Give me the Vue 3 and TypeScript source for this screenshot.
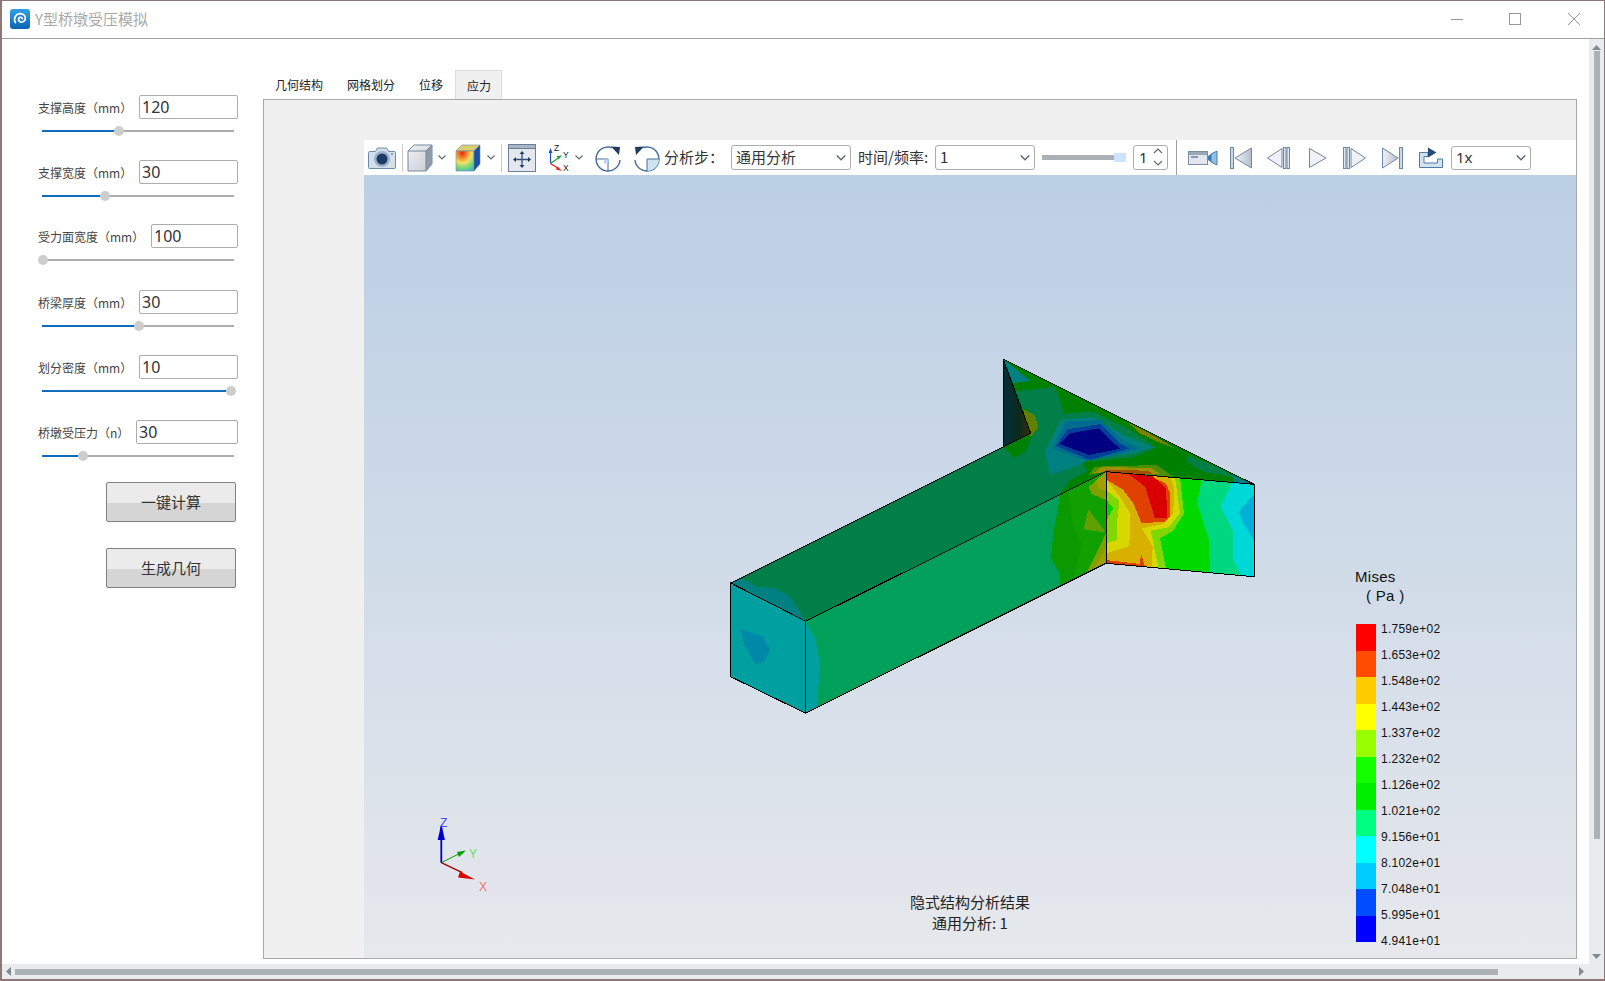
<template>
  <div class="desktop">
    <div class="window">
      <header class="titlebar">
        <svg class="logo" width="20" height="20" viewBox="0 0 20 20">
          <defs>
            <linearGradient id="logoFill" x1="0" y1="0" x2="0" y2="1">
              <stop offset="0" stop-color="#2fa0e6" />
              <stop offset="1" stop-color="#0b62b5" />
            </linearGradient>
          </defs>
          <rect width="20" height="20" rx="3" fill="url(#logoFill)" />
          <path d="M5.5 13.5C3 9.5 6 4.5 10.5 4.6c3.6.1 5.6 3.2 4.6 6-.9 2.500-4.200 3.300-5.900 1.600-1.300-1.300-.8-3.500.9-3.900 1.100-.2 2 .4 2.200 1.300" fill="none" stroke="#fff" stroke-width="1.700" stroke-linecap="round" />
        </svg>
        <span class="app-title">Y型桥墩受压模拟</span>
        <div class="winctl">
          <svg width="12" height="12" viewBox="0 0 12 12"><path d="M0 6.500h12" /></svg>
        </div>
        <div class="winctl">
          <svg width="12" height="12" viewBox="0 0 12 12"><rect x=".5" y=".5" width="11" height="11" /></svg>
        </div>
        <div class="winctl">
          <svg width="12" height="12" viewBox="0 0 12 12"><path d="M0 0l12 12M12 0L0 12" /></svg>
        </div>
      </header>

      <div class="body-row">
        <div class="scroll-content">
          <aside class="sidebar">
            <div v-for="p in params" :key="p.label" class="param" :style="{ height: p.pitch + 'px' }">
              <div class="param-row">
                <label class="param-label">{{ p.label }}</label>
                <div class="param-input" :style="{ width: p.inputWidth + 'px' }">{{ p.value }}</div>
              </div>
              <div class="slider">
                <div class="slider-fill" :style="{ width: p.thumb + 'px' }"></div>
                <div class="slider-thumb" :style="{ left: p.thumb + 'px' }"></div>
              </div>
            </div>
            <button class="action">一键计算</button>
            <button class="action second">生成几何</button>
          </aside>

          <section class="workspace">
            <nav class="tabs">
              <div v-for="t in tabs" :key="t" class="tab" :class="{ active: t === '应力' }">{{ t }}</div>
            </nav>
            <div class="panel">
              <div class="viewer">
                <div class="toolbar">
                  <svg class="ml4" width="28" height="24" viewBox="0 0 28 24">
                    <path d="M1.500 5.500h6l2-3.500h9l2 3.500h6a1 1 0 0 1 1 1v15a1 1 0 0 1-1 1h-25a1 1 0 0 1-1-1v-15a1 1 0 0 1 1-1z" fill="#d5dfeb" stroke="#6d8bab" />
                    <circle cx="14" cy="13" r="8" fill="#9db3cb" />
                    <circle cx="14" cy="13" r="5.500" fill="#1d3a68" />
                    <circle cx="24" cy="8" r="1" fill="#6d8bab" />
                  </svg>
                  <i class="sep ml6"></i>
                  <svg class="ml4" width="26" height="28" viewBox="0 0 26 28">
                    <defs>
                      <linearGradient id="cubeFace" x1="0" y1="0" x2="1" y2="1">
                        <stop offset="0" stop-color="#f2f3f5" />
                        <stop offset="1" stop-color="#c4c9d1" />
                      </linearGradient>
                      <radialGradient id="heatFace" cx=".35" cy=".1" r="1.100">
                        <stop offset="0" stop-color="#e02818" />
                        <stop offset=".25" stop-color="#f09030" />
                        <stop offset=".45" stop-color="#f4e060" />
                        <stop offset=".7" stop-color="#70d880" />
                        <stop offset="1" stop-color="#30a8e0" />
                      </radialGradient>
                    </defs>
                    <path d="M7 1h18v19l-6 7H1V7z" fill="url(#cubeFace)" stroke="#74889e" />
                    <path d="M19 7l6-6v19l-6 7z" fill="#8d9aaa" />
                    <path d="M1 7h18l6-6" fill="none" stroke="#74889e" />
                    <path d="M19 7v20" stroke="#74889e" />
                  </svg>
                  <svg class="chev ml5" width="8" height="5" viewBox="0 0 8 5"><path d="M.5.500L4 4 7.500.5" /></svg>
                  <svg class="ml9" width="26" height="28" viewBox="0 0 26 28">
                    <path d="M7 1h18L19 7H1z" fill="#d8d070" stroke="#74889e" stroke-width=".6" />
                    <path d="M1 7h18v20H1z" fill="url(#heatFace)" stroke="#74889e" stroke-width=".6" />
                    <path d="M19 7l6-6v19l-6 7z" fill="#1c4fa8" stroke="#74889e" stroke-width=".6" />
                  </svg>
                  <svg class="chev ml6" width="8" height="5" viewBox="0 0 8 5"><path d="M.5.500L4 4 7.500.5" /></svg>
                  <i class="sep ml6"></i>
                  <svg class="ml6" width="28" height="28" viewBox="0 0 28 28">
                    <rect x=".5" y=".5" width="27" height="27" fill="#e4e8ee" stroke="#6d7f95" />
                    <rect x=".5" y=".5" width="27" height="4" fill="#a8b6c6" stroke="#6d7f95" />
                    <path d="M14 8v15M7 15.500h15" stroke="#34507a" stroke-width="1.300" />
                    <path d="M14 7l-2.500 3h5zM14 24l-2.500-3h5zM5 15.500l3-2.500v5zM23 15.500l-3-2.500v5z" fill="#1f3b66" />
                  </svg>
                  <svg class="ml12" width="26" height="28" viewBox="0 0 26 28">
                    <path d="M2.500 19.500V8" stroke="#2050c0" stroke-width="1.200" />
                    <path d="M2.500 4L.5 9h4z" fill="#2050c0" />
                    <path d="M2.500 19.500l8-5.500" stroke="#20a040" stroke-width="1.200" />
                    <path d="M14 11.500l-5.500.5 2 3.500z" fill="#20a040" />
                    <path d="M2.500 19.500l8 5" stroke="#e02020" stroke-width="1.200" />
                    <path d="M14 27l-4.500-4.500-1.500 3z" fill="#e02020" />
                    <text x="6" y="6.500" class="axis-mini">Z</text>
                    <text x="15" y="13.500" class="axis-mini">Y</text>
                    <text x="15" y="27" class="axis-mini">X</text>
                  </svg>
                  <svg class="chev ml1" width="8" height="5" viewBox="0 0 8 5"><path d="M.5.500L4 4 7.500.5" /></svg>
                  <svg class="ml12" width="26" height="28" viewBox="0 0 26 28">
                    <path d="M25 16A12 12 0 1 1 17 3.700" fill="none" stroke="#456d99" stroke-width="1.400" />
                    <path d="M1 15h12v12" fill="none" stroke="#456d99" stroke-width="1" />
                    <rect x="9" y="15.500" width="4" height="4" fill="#bcd7ee" />
                    <path d="M16 2.500l9 .5-1 8z" fill="#1f3b66" />
                  </svg>
                  <svg class="ml13" width="26" height="28" viewBox="0 0 26 28">
                    <path d="M1 16A12 12 0 1 0 9 3.700" fill="none" stroke="#456d99" stroke-width="1.400" />
                    <path d="M13 27V15h12A12 12 0 0 1 13 27z" fill="#cfe2f3" />
                    <path d="M25 15H13v12" fill="none" stroke="#456d99" stroke-width="1" />
                    <path d="M10 2.500L1 3l1 8z" fill="#1f3b66" />
                  </svg>
                  <span class="tb-label ml4 w67">分析步：</span>
                  <div class="combo w120"><span>通用分析</span><svg class="chev" width="10" height="6" viewBox="0 0 8 5"><path d="M.5.500L4 4 7.500.5" /></svg></div>
                  <span class="tb-label ml7 w77">时间/频率:</span>
                  <div class="combo w100"><span>1</span><svg class="chev" width="10" height="6" viewBox="0 0 8 5"><path d="M.5.500L4 4 7.500.5" /></svg></div>
                  <div class="time-slider ml7"><div class="time-handle"></div></div>
                  <div class="spin ml7">1
                    <svg class="spin-arrows" width="10" height="18" viewBox="0 0 10 18">
                      <path d="M1 5l4-4 4 4M1 13l4 4 4-4" />
                    </svg>
                  </div>
                  <i class="sep tall ml8"></i>
                  <svg class="ml11" width="30" height="16" viewBox="0 0 30 16">
                    <rect x=".5" y="1.500" width="19" height="13" fill="#e2e7ee" stroke="#7b8da3" />
                    <rect x="1" y="2" width="18" height="3" fill="#9aa8ba" />
                    <rect x="3" y="6" width="7" height="2" fill="#8a98aa" />
                    <path d="M20 6l3-2v8l-3-2z" fill="#2f7fc0" />
                    <path d="M23 4l6-3v14l-6-3z" fill="#8fc0e6" stroke="#4d7ba6" />
                  </svg>
                  <svg class="ml12" width="22" height="22" viewBox="0 0 22 22">
                    <rect x=".5" y=".5" width="3" height="21" fill="#cdd6e1" stroke="#6d87a6" />
                    <path d="M5 11L21.500 1v20z" fill="url(#mediaFill)" stroke="#6d87a6" />
                  </svg>
                  <svg class="ml15" width="23" height="22" viewBox="0 0 23 22">
                    <defs>
                      <linearGradient id="mediaFill" x1="0" y1="0" x2="1" y2="0">
                        <stop offset="0" stop-color="#eef2f6" />
                        <stop offset="1" stop-color="#b4bfcc" />
                      </linearGradient>
                    </defs>
                    <path d="M.5 11L15 1.500v19z" fill="#eef2f7" stroke="#6d87a6" />
                    <rect x="16.500" y=".5" width="2.500" height="21" fill="#dfe6ee" stroke="#6d87a6" />
                    <rect x="20" y=".5" width="2.500" height="21" fill="#dfe6ee" stroke="#6d87a6" />
                  </svg>
                  <svg class="ml19" width="18" height="20" viewBox="0 0 18 20">
                    <path d="M.5.500L17 10 .5 19.500z" fill="#eef2f7" stroke="#6d87a6" />
                  </svg>
                  <svg class="ml16" width="23" height="22" viewBox="0 0 23 22">
                    <rect x=".5" y=".5" width="2.500" height="21" fill="#dfe6ee" stroke="#6d87a6" />
                    <rect x="4" y=".5" width="2.500" height="21" fill="#dfe6ee" stroke="#6d87a6" />
                    <path d="M8 1.500L22.500 11 8 20.500z" fill="#eef2f7" stroke="#6d87a6" />
                  </svg>
                  <svg class="ml16" width="21" height="22" viewBox="0 0 21 22">
                    <path d="M.5 1L16 11 .5 21z" fill="url(#mediaFill)" stroke="#6d87a6" />
                    <rect x="17.500" y=".5" width="3" height="21" fill="#cdd6e1" stroke="#6d87a6" />
                  </svg>
                  <svg class="ml16" width="24" height="21" viewBox="0 0 24 21">
                    <path d="M.5 5.500H9v4H5V16h13.500v-4h5v8.500H.5z" fill="#d4e2f0" stroke="#4d7ba6" />
                    <path d="M9 .5l8.500 5L9 10.500z" fill="#234a7a" />
                  </svg>
                  <div class="combo w80 ml8 short"><span>1x</span><svg class="chev" width="10" height="6" viewBox="0 0 8 5"><path d="M.5.500L4 4 7.500.5" /></svg></div>
                </div>

                <div class="canvas">
                  <svg class="scene" width="1213" height="783" viewBox="364 175 1213 783" shape-rendering="crispEdges">
                    <defs>
                      <clipPath id="clipTop"><polygon points="130,58 882,433 438,395 -463,844 -688,729 130,320" /></clipPath>
                      <clipPath id="clipWing"><polygon points="438,395 882,433 882,710 438,670" /></clipPath>
                      <clipPath id="clipSide"><polygon points="257,574 1158,125 1158,400 257,850" /></clipPath>
                      <clipPath id="clipFront"><polygon points="32,460 257,574 257,850 32,740" /></clipPath>
                      <linearGradient id="shadowFace" x1="0" y1="0" x2="1" y2="0">
                        <stop offset="0" stop-color="#022f3a" />
                        <stop offset=".6" stop-color="#0c2a1c" />
                        <stop offset="1" stop-color="#3a2f08" />
                      </linearGradient>
                    </defs>
                    <g transform="translate(960 340) scale(.33333)">
                      <g clip-path="url(#clipTop)">
                        <polygon v-for="(l, i) in topLayers" :key="i" :points="l.pts" :fill="l.fill" />
                      </g>
                      <polygon points="130,58 212,280 130,320" fill="url(#shadowFace)" />
                    </g>
                    <g transform="translate(720 430) scale(.33333)">
                      <polygon points="32,460 62,445 110,470 165,475 205,495 257,574" fill="#008080" />
                      <g clip-path="url(#clipSide)">
                        <polygon v-for="(l, i) in sideLayers" :key="i" :points="l.pts" :fill="l.fill" />
                      </g>
                      <g clip-path="url(#clipFront)">
                        <polygon points="32,460 257,574 257,850 32,740" fill="#00a0a0" />
                        <polygon points="62,597 130,620 150,660 132,695 107,703 75,650" fill="#0088a8" />
                      </g>
                    </g>
                    <g transform="translate(960 340) scale(.33333)">
                      <g clip-path="url(#clipWing)">
                        <polygon v-for="(l, i) in wingLayers" :key="i" :points="l.pts" :fill="l.fill" />
                      </g>
                    </g>
                    <g class="edges">
                      <polygon points="730.7,583 805.7,621.300 805.700,713.300 730.700,676.700" />
                      <polygon points="1106,471.700 1254,484.300 1254,576.700 1106,563.300" />
                      <polyline points="730.700,583 1003.300,446.700 1003.300,359.300 1254,484.300" />
                      <polyline points="1003.300,359.300 1030.700,433.300 1003.300,446.700" />
                      <polyline points="805.700,621.300 1106,471.700" />
                      <polyline points="805.700,713.300 1106,563.300" />
                    </g>
                    <g class="axes" shape-rendering="auto">
                      <path d="M441.300 862.700V826" stroke="#0000c8" stroke-width="1.800" />
                      <path d="M441.300 824l-3.600 16h7.200z" fill="#0000d0" />
                      <path d="M441.300 862.700l18-9" stroke="#00a000" stroke-width="1" />
                      <path d="M466 850.500l-9 1.500 2 5z" fill="#00a000" />
                      <path d="M441.300 862.700l21 10" stroke="#a00000" stroke-width="1.300" />
                      <path d="M475 879.500l-15-8-2 6z" fill="#e00000" />
                      <text x="440" y="827" fill="#4848ff" class="axis-label">Z</text>
                      <text x="469" y="858" fill="#60e060" class="axis-label">Y</text>
                      <text x="479" y="891" fill="#f07070" class="axis-label">X</text>
                    </g>
                  </svg>
                  <div class="caption">
                    <div>隐式结构分析结果</div>
                    <div>通用分析: 1</div>
                  </div>
                  <div class="legend">
                    <div class="legend-title">Mises<br /><span class="unit">( Pa )</span></div>
                    <div class="legend-body">
                      <div class="ramp">
                        <div v-for="c in ramp" :key="c" class="ramp-band" :style="{ background: c }"></div>
                      </div>
                      <div class="ticks">
                        <div v-for="t in ticks" :key="t">{{ t }}</div>
                      </div>
                    </div>
                  </div>
                </div>
              </div>
            </div>
          </section>
        </div>

        <div class="vscroll">
          <svg width="9" height="5" viewBox="0 0 9 5"><path d="M4.500 0L9 5H0z" /></svg>
          <div class="vthumb"></div>
          <svg class="vdown" width="9" height="5" viewBox="0 0 9 5"><path d="M0 0h9L4.500 5z" /></svg>
        </div>
      </div>

      <div class="hscroll">
        <svg width="5" height="9" viewBox="0 0 5 9"><path d="M0 4.500L5 0v9z" /></svg>
        <div class="hthumb"></div>
        <svg class="hright" width="5" height="9" viewBox="0 0 5 9"><path d="M5 4.500L0 0v9z" /></svg>
      </div>
    </div>
  </div>
</template>

<script setup lang="ts">
interface Param {
  label: string
  value: string
  inputWidth: number
  thumb: number
  pitch: number
}

const params: Param[] = [
  { label: '支撑高度（mm）', value: '120', inputWidth: 99, thumb: 77, pitch: 65 },
  { label: '支撑宽度（mm）', value: '30', inputWidth: 99, thumb: 63, pitch: 64 },
  { label: '受力面宽度（mm）', value: '100', inputWidth: 87, thumb: 1, pitch: 66 },
  { label: '桥梁厚度（mm）', value: '30', inputWidth: 99, thumb: 97, pitch: 65 },
  { label: '划分密度（mm）', value: '10', inputWidth: 99, thumb: 189, pitch: 65 },
  { label: '桥墩受压力（n）', value: '30', inputWidth: 102, thumb: 41, pitch: 62 }
]

const tabs = ['几何结构', '网格划分', '位移', '应力']

const ramp = ['#ff0000', '#ff4c00', '#ffcc00', '#ffff00', '#99ff00', '#14ff00', '#00f000', '#00ff80', '#00ffff', '#00ccff', '#004cff', '#0000ff']

const ticks = ['1.759e+02', '1.653e+02', '1.548e+02', '1.443e+02', '1.337e+02', '1.232e+02', '1.126e+02', '1.021e+02', '9.156e+01', '8.102e+01', '7.048e+01', '5.995e+01', '4.941e+01']

// contour bands, painted back to front, in 3x coordinates of each face
const topLayers = [
  { fill: '#008048', pts: '130,58 882,433 438,395 -463,844 -688,729 130,320' },
  { fill: '#008000', pts: '130,58 882,433 438,395 300,462 330,420 380,395 370,370 270,405 255,335 200,330 165,355 130,320' },
  { fill: '#008048', pts: '160,155 250,145 285,140 310,215 300,235 255,335 200,330 215,290 235,265 225,225 190,205 165,180' },
  { fill: '#008048', pts: '300,222 400,215 510,270 590,322 520,352 380,365 300,300' },
  { fill: '#008080', pts: '130,58 210,122 160,130' },
  { fill: '#008048', pts: '680,345 780,385 825,412 730,395 680,365' },
  { fill: '#008080', pts: '815,405 882,433 825,428' },
  { fill: '#608000', pts: '190,208 225,225 235,265 212,290 200,260' },
  { fill: '#808000', pts: '505,248 560,275 645,325 600,308 540,280' },
  { fill: '#008080', pts: '255,335 300,240 400,232 500,290 580,322 490,345 390,350 370,370 270,405' },
  { fill: '#006c90', pts: '275,325 315,245 420,240 490,300 540,325 470,345 380,362 330,345' },
  { fill: '#004098', pts: '288,318 322,268 422,252 480,310 510,325 390,360' },
  { fill: '#000080', pts: '300,312 330,280 415,265 460,310 482,325 440,335 385,345' },
  { fill: '#4c9000', pts: '385,405 405,380 590,375 640,410 438,395' },
  { fill: '#a09000', pts: '400,400 425,380 575,385 600,402 438,395' },
  { fill: '#a05000', pts: '430,395 440,390 565,392 580,404' }
]

const sideLayers = [
  { fill: '#009f5a', pts: '257,574 1158,125 1158,400 257,850' },
  { fill: '#00a0a0', pts: '257,574 285,625 300,700 290,840 257,850' },
  { fill: '#0a9a00', pts: '1158,125 1158,400 1020,465 1020,430 993,385 1000,310 1020,200 1032,168' },
  { fill: '#10a000', pts: '1040,170 1158,125 1158,400 1060,450 1085,345 1060,290' },
  { fill: '#60a000', pts: '1105,238 1157,307 1090,298' },
  { fill: '#80a000', pts: '1158,125 1120,160 1105,170 1115,192 1158,210' },
  { fill: '#a0a000', pts: '1158,125 1130,150 1135,175 1158,185' },
  { fill: '#80a000', pts: '1158,310 1100,430 1158,400' },
  { fill: '#a0a000', pts: '1158,350 1125,415 1158,400' }
]

const wingLayers = [
  { fill: '#00d8d8', pts: '438,395 882,433 882,710 438,670' },
  { fill: '#00b0d8', pts: '882,462 836,515 850,550 882,600' },
  { fill: '#00d880', pts: '438,395 815,428 783,500 818,570 818,655 848,715 438,670' },
  { fill: '#00d800', pts: '438,395 725,420 712,490 747,600 750,700 438,670' },
  { fill: '#80d800', pts: '438,395 660,412 672,520 640,572 600,595 620,695 438,670' },
  { fill: '#d8d800', pts: '438,395 645,412 660,520 625,562 572,572 597,690 438,670' },
  { fill: '#d8b000', pts: '445,395 630,412 642,440 640,520 610,552 545,565 578,620 575,682 438,670 438,640 505,620 510,590 510,520 480,470 440,420' },
  { fill: '#d8d800', pts: '438,430 480,470 508,530 508,615 438,635' },
  { fill: '#80d800', pts: '438,450 478,482 472,540 470,600 438,610' },
  { fill: '#00d800', pts: '438,478 460,505 445,530 438,550' },
  { fill: '#e04000', pts: '440,395 560,405 618,430 630,460 630,530 615,545 545,550 520,490 490,450 440,420' },
  { fill: '#d80000', pts: '505,402 578,408 618,445 622,535 585,535 555,440' },
  { fill: '#e04000', pts: '438,660 540,672 543,640 555,680 438,670' }
]
</script>

<style scoped>
.desktop {
  width: 1605px;
  height: 981px;
  box-sizing: border-box;
  padding: 1px 1px 2px 2px;
  background: #8d7876;
  font-family: "Noto Sans CJK SC", "Noto Sans", sans-serif;
  color: #333;
}

.window {
  height: 100%;
  display: flex;
  flex-direction: column;
  background: #fff;
}

.titlebar {
  height: 38px;
  flex: none;
  box-sizing: border-box;
  display: flex;
  align-items: center;
  padding: 0 1px 2px 8px;
  border-bottom: 1px solid #a0a0a0;
}

.app-title {
  margin-left: 5px;
  flex: 1;
  font-size: 15px;
  color: #a8a8a8;
}

.winctl {
  width: 58.5px;
  display: flex;
  justify-content: center;
}

.winctl svg {
  fill: none;
  stroke: #999;
  stroke-width: 1;
}

.body-row {
  flex: 1;
  min-height: 0;
  display: flex;
}

.scroll-content {
  flex: 1;
  display: flex;
  min-width: 0;
}

.sidebar {
  width: 261px;
  flex: none;
  box-sizing: border-box;
  padding: 56px 25px 0 36px;
  display: flex;
  flex-direction: column;
}

.param {
  flex: none;
}

.param-row {
  display: flex;
  align-items: center;
  justify-content: space-between;
  height: 24px;
}

.param-label {
  font-size: 12px;
  white-space: nowrap;
  color: #444;
}

.param-input {
  box-sizing: border-box;
  height: 24px;
  line-height: 22px;
  padding-left: 2px;
  font-size: 16px;
  font-family: "Noto Sans", sans-serif;
  border: 1px solid #adadad;
  border-radius: 2px;
  color: #333;
}

.slider {
  position: relative;
  height: 2px;
  margin: 11px 4px 0;
  background: #adadad;
}

.slider-fill {
  height: 2px;
  background: #0f6cbd;
}

.slider-thumb {
  position: absolute;
  top: -4px;
  width: 10px;
  height: 10px;
  margin-left: -5px;
  border-radius: 50%;
  background: #cdcdcd;
}

.action {
  width: 130px;
  height: 40px;
  flex: none;
  align-self: flex-end;
  margin-right: 2px;
  padding: 0 0 2px;
  font: 15px "Noto Sans CJK SC", sans-serif;
  color: #333;
  border: 1px solid #808080;
  border-radius: 2px;
  background: linear-gradient(#ebebeb 0 52%, #d5d5d5 52% 100%);
}

.second {
  margin-top: 26px;
}

.workspace {
  flex: 1;
  min-width: 0;
  display: flex;
  flex-direction: column;
  margin-right: 12px;
  padding: 31px 0 5px;
}

.tabs {
  display: flex;
  height: 29px;
  flex: none;
}

.tab {
  box-sizing: border-box;
  padding: 0 12px;
  font-size: 12px;
  line-height: 29px;
  color: #222;
  white-space: nowrap;
}

.tab.active {
  width: 47px;
  padding: 0 0 0 11px;
  background: #f0f0f0;
  border: 1px solid #dcdcdc;
  border-bottom: none;
}

.panel {
  flex: 1;
  min-height: 0;
  box-sizing: border-box;
  border: 1px solid #a8a8a8;
  background: #f0f0f0;
  padding: 40px 0 0 100px;
  display: flex;
}

.viewer {
  flex: 1;
  min-width: 0;
  display: flex;
  flex-direction: column;
}

.toolbar {
  height: 35px;
  flex: none;
  display: flex;
  align-items: center;
  background: #fff;
}

.toolbar svg {
  flex: none;
}

.sep {
  width: 1px;
  height: 28px;
  flex: none;
  background: #c8c8c8;
}

.sep.tall {
  height: 35px;
  background: #a0a0a0;
}

.chev {
  fill: none;
  stroke: #5a6a7a;
  stroke-width: 1.200;
}

.axis-mini {
  font: 8.500px "Liberation Sans", sans-serif;
  fill: #222;
}

.tb-label {
  padding-bottom: 2px;
  font-size: 15px;
  white-space: nowrap;
  color: #333;
  flex: none;
}

.w67 { width: 56px; margin-right: 11px; }
.w77 { width: 70px; margin-right: 7px; }
.w120 { width: 120px; }
.w100 { width: 100px; }
.w80 { width: 80px; }

.combo {
  box-sizing: border-box;
  height: 25px;
  flex: none;
  display: flex;
  align-items: center;
  justify-content: space-between;
  padding: 0 4px 0 4px;
  font-size: 15px;
  color: #333;
  border: 1px solid #adadad;
  border-radius: 3px;
  background: #fff;
}

.combo span {
  margin-top: -2px;
}

.short {
  height: 24px;
  font-family: "Noto Sans", sans-serif;
}

.time-slider {
  position: relative;
  width: 84px;
  height: 5px;
  flex: none;
  background: #aab0b5;
}

.time-handle {
  position: absolute;
  right: 0;
  top: -2px;
  width: 12px;
  height: 9px;
  background: #cce4ff;
}

.spin {
  position: relative;
  box-sizing: border-box;
  width: 35px;
  height: 25px;
  flex: none;
  padding-left: 5px;
  font: 15px/22px "Noto Sans", sans-serif;
  border: 1px solid #adadad;
  border-radius: 3px;
}

.spin-arrows {
  position: absolute;
  right: 4px;
  top: 2px;
  fill: none;
  stroke: #5a6a7a;
  stroke-width: 1.200;
}

.ml1 { margin-left: 1px; }
.ml4 { margin-left: 4px; }
.ml5 { margin-left: 5px; }
.ml6 { margin-left: 6px; }
.ml7 { margin-left: 7px; }
.ml8 { margin-left: 8px; }
.ml9 { margin-left: 9px; }
.ml11 { margin-left: 11px; }
.ml12 { margin-left: 12px; }
.ml13 { margin-left: 13px; }
.ml15 { margin-left: 15px; }
.ml16 { margin-left: 16px; }
.ml19 { margin-left: 19px; }

.canvas {
  position: relative;
  flex: 1;
  min-height: 0;
  overflow: hidden;
  background: linear-gradient(#bbcfe5, #e6e8ec);
}

.scene {
  position: absolute;
  left: 0;
  top: 0;
}

.edges {
  fill: none;
  stroke: #000;
  stroke-width: 1;
}

.axis-label {
  font: 12px "Liberation Sans", sans-serif;
}

.caption {
  position: absolute;
  left: 541px;
  top: 716px;
  width: 130px;
  text-align: center;
  font-size: 15px;
  line-height: 21px;
  color: #222;
  white-space: nowrap;
}

.legend {
  position: absolute;
  left: 992px;
  top: 392px;
  font-family: "Liberation Sans", sans-serif;
  color: #111;
}

.legend-title {
  margin-left: -1px;
  font-size: 15px;
  line-height: 19px;
  letter-spacing: .3px;
}

.unit {
  margin-left: 11px;
  white-space: pre;
}

.legend-body {
  display: flex;
  margin-top: 19px;
}

.ramp {
  width: 20px;
  height: 318px;
  display: flex;
  flex-direction: column;
}

.ramp-band {
  flex: 1;
}

.ticks {
  margin-left: 5px;
  font-size: 12px;
  line-height: 26px;
  letter-spacing: .25px;
  margin-top: -8px;
}

.vscroll {
  width: 15px;
  flex: none;
  display: flex;
  flex-direction: column;
  align-items: center;
  background: #e9ebee;
  padding-top: 6px;
  box-sizing: border-box;
  fill: #7f8a94;
}

.vthumb {
  width: 6px;
  height: 788px;
  margin-top: 1px;
  background: #adb2b6;
}

.vdown {
  margin-top: auto;
  margin-bottom: 5px;
}

.hscroll {
  height: 15px;
  flex: none;
  display: flex;
  align-items: center;
  padding: 0 20px 0 4px;
  background: #e9ebee;
  fill: #7f8a94;
}

.hthumb {
  width: 1483px;
  height: 6px;
  margin-left: 4px;
  background: #adb2b6;
}

.hright {
  margin-left: auto;
}
</style>

<style>
html, body {
  margin: 0;
  overflow: hidden;
}
</style>
